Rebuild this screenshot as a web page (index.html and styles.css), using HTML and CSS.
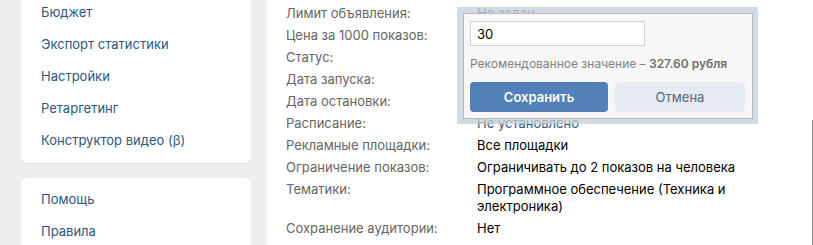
FILE: index.html
```html
<!DOCTYPE html>
<html lang="ru">
<head>
  <meta charset="UTF-8" />
  <title>Объявление</title>
  <link rel="stylesheet" href="styles.css">
</head>
<body>
  <div class="page">
    <!-- Левое меню -->
    <div class="side">
      <div class="card">
        <a class="menu-item" href="#">Бюджет</a>
        <a class="menu-item" href="#">Экспорт статистики</a>
        <a class="menu-item" href="#">Настройки</a>
        <a class="menu-item" href="#">Ретаргетинг</a>
        <a class="menu-item" href="#">Конструктор видео (β)</a>
      </div>
      <div class="card card-help">
        <a class="menu-item" href="#">Помощь</a>
        <a class="menu-item" href="#">Правила</a>
      </div>
    </div>

    <!-- Параметры объявления -->
    <div class="main">
      <div class="row"><span class="label">Лимит объявления:</span><a class="value link" href="#">Не задан</a></div>
      <div class="row"><span class="label">Цена за 1000 показов:</span><span class="value"></span></div>
      <div class="row"><span class="label">Статус:</span><span class="value"></span></div>
      <div class="row"><span class="label">Дата запуска:</span><span class="value"></span></div>
      <div class="row"><span class="label">Дата остановки:</span><span class="value"></span></div>
      <div class="row"><span class="label">Расписание:</span><a class="value link" href="#">Не установлено</a></div>
      <div class="row"><span class="label">Рекламные площадки:</span><span class="value">Все площадки</span></div>
      <div class="row"><span class="label">Ограничение показов:</span><span class="value">Ограничивать до 2 показов на человека</span></div>
      <div class="row"><span class="label">Тематики:</span><span class="value">Программное обеспечение (Техника и электроника)</span></div>
      <div class="row"><span class="label">Сохранение аудитории:</span><span class="value">Нет</span></div>

      <!-- Всплывающее окно редактирования цены -->
      <div class="popup">
        <div class="popup-inner">
          <input class="price-input" type="text" value="30">
          <div class="hint">Рекомендованное значение – <b>327.60 рубля</b></div>
          <div class="buttons">
            <button class="btn btn-save">Сохранить</button>
            <button class="btn btn-cancel">Отмена</button>
          </div>
        </div>
      </div>

      <div class="edge"></div>
    </div>
  </div>
</body>
</html>
```

FILE: styles.css
```css
body {
  margin: 0;
  background-color: #edeef0;
  font-family: Inter, "Liberation Sans", Arial, sans-serif;
  font-size: 13px;
  overflow: hidden;
}
.page {
  display: flex;
  align-items: flex-start;
  padding-left: 21px;
  height: 245px;
}
.side {
  width: 230px;
  flex-shrink: 0;
  display: flex;
  flex-direction: column;
  gap: 15px;
  margin-top: -12px;
}
.card {
  background: #fff;
  border-radius: 6px;
  padding: 8px 0 7px;
  display: flex;
  flex-direction: column;
  box-shadow: 0 1px 0 0 #dce1e6;
}
.card-help {
  padding-top: 5px;
}
.menu-item {
  display: block;
  height: 32px;
  line-height: 32px;
  padding-left: 20px;
  color: #2a5885;
  text-decoration: none;
}
.main {
  position: relative;
  flex: 1;
  align-self: stretch;
  margin-left: 16px;
  background: #fff;
  padding: 5px 0 0 19px;
}
.row {
  display: flex;
  line-height: 17px;
  margin-bottom: 5px;
}
.label {
  width: 191px;
  flex-shrink: 0;
  color: #656565;
}
.value {
  width: 300px;
  color: #000;
}
.link {
  color: #2a5885;
  text-decoration: none;
}
.popup {
  position: absolute;
  left: 190px;
  top: 7px;
  width: 290px;
  border: 5px solid rgba(196, 205, 216, 0.75);
  border-left-width: 6px;
  border-top-width: 6px;
}
.popup-inner {
  background: #f7f7f7;
  border: 1px solid #b4b7bb;
  padding: 7px 6px 6px;
}
.price-input {
  display: block;
  box-sizing: border-box;
  width: 175px;
  height: 25px;
  margin: 0;
  padding: 0 6px;
  border: 1px solid #c5d0db;
  background: #fff;
  font-family: inherit;
  font-size: 13px;
  color: #000;
  outline: none;
}
.hint {
  margin-top: 9px;
  line-height: 17px;
  color: #828282;
  font-size: 12px;
}
.hint b {
  color: #6f6f6f;
  font-weight: 600;
}
.buttons {
  display: flex;
  gap: 7px;
  margin-top: 10px;
}
.btn {
  height: 30px;
  border: none;
  border-radius: 4px;
  font-family: inherit;
  font-size: 13px;
  cursor: pointer;
}
.btn-save {
  width: 138px;
  background: #5181b8;
  color: #fff;
  font-weight: 600;
}
.btn-cancel {
  width: 130px;
  background: #e5ebf1;
  color: #55677d;
}
.edge {
  position: absolute;
  right: 0;
  top: 120px;
  bottom: 0;
  border-left: 1px solid #8f8f8f;
}
```
